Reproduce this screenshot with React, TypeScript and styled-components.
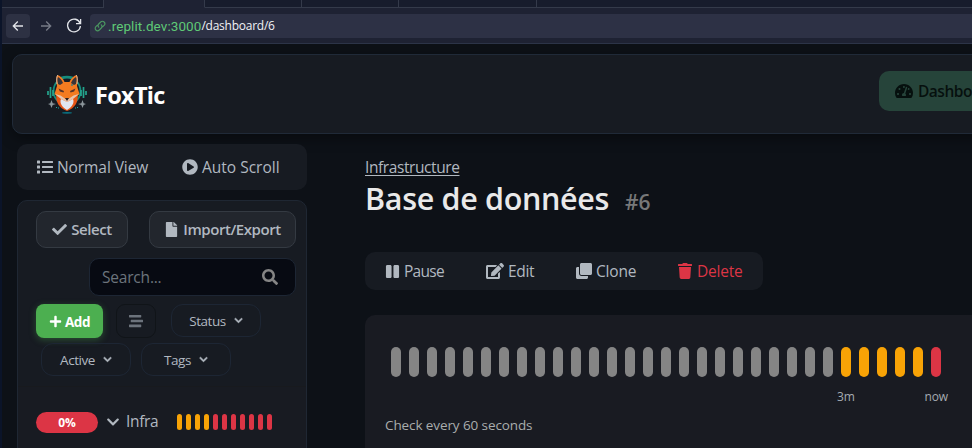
import React from 'react';
import styled, { createGlobalStyle, css } from 'styled-components';
import {
  FaCheck, FaChevronDown, FaClone, FaEdit, FaFile, FaList, FaPause, FaPlayCircle,
  FaPlus, FaSearch, FaStream, FaTachometerAlt, FaTrash,
} from 'react-icons/fa';

const Global = createGlobalStyle`
  * { box-sizing: border-box; }
  html, body { margin: 0; height: 100%; overflow: hidden; background: #0d1117; }
  body { font-family: "Open Sans", "Noto Sans", sans-serif; color: #b1b8c0; }
  svg { display: block; flex: none; }
`;

const Window = styled.div`
  width: 972px;
  height: 448px;
  overflow: hidden;
  background: #0d1117;
  border-left: 2px solid #0b1429;
`;

const TabStrip = styled.div`
  display: flex;
  height: 8px;
  background: #1e2233;
`;

const BrowserTab = styled.div<{ $width: number; $active?: boolean }>`
  width: ${p => p.$width}px;
  flex: none;
  height: 8px;
  background: ${p => (p.$active ? '#1e2233' : '#171c2c')};
  border-right: 1px solid #343a4a;
  border-bottom: 1px solid ${p => (p.$active ? '#1e2233' : '#343a4a')};
`;

const Toolbar = styled.div`
  display: flex;
  align-items: center;
  height: 36px;
  padding: 0 0 0 4px;
  background: #1e2233;
  border-bottom: 1px solid #2d3549;
`;

const NavButton = styled.button<{ $filled?: boolean; $dim?: boolean }>`
  display: flex;
  align-items: center;
  justify-content: center;
  width: 24px;
  height: 24px;
  margin-right: 4px;
  padding: 0;
  border: 0;
  border-radius: 4px;
  background: ${p => (p.$filled ? '#2d3143' : 'transparent')};
  color: ${p => (p.$dim ? '#777b87' : '#e2e4e9')};
`;

const AddressBar = styled.div`
  display: flex;
  align-items: center;
  flex: 1;
  height: 24px;
  padding-left: 4px;
  border-radius: 4px 0 0 4px;
  background: #2d3145;
`;

const Host = styled.span`
  margin-left: 2px;
  font: 13.5px/24px Roboto, sans-serif;
  letter-spacing: 0.08px;
  color: #5fc976;
`;

const Path = styled.span`
  font: 500 12px/24px "Open Sans", sans-serif;
  letter-spacing: -0.25px;
  color: #f1f2f5;
`;

const Header = styled.header`
  display: flex;
  align-items: center;
  width: 1100px;
  height: 80px;
  margin: 10px 0 0 10px;
  padding-left: 34px;
  border: 1px solid #202a38;
  border-radius: 10px;
  background: #171b22;
  box-shadow: 0 4px 14px rgba(0, 0, 0, 0.4);
`;

const Brand = styled.div`
  width: 832px;
  display: flex;
  align-items: center;
`;

const BrandName = styled.span`
  margin: 2px 0 0 8px;
  font-size: 23.5px;
  line-height: 30px;
  font-weight: 700;
  letter-spacing: -0.7px;
  color: #fff;
`;

const DashboardLink = styled.div`
  display: flex;
  align-items: center;
  gap: 5px;
  width: 140px;
  height: 40px;
  margin-top: -6px;
  padding-left: 16px;
  border-radius: 10px;
  background: #26443a;
  color: #06100e;
  font-size: 15.5px;
  font-weight: 600;
  letter-spacing: -0.5px;
`;

const Columns = styled.div`
  display: flex;
  padding-left: 15px;
`;

const Sidebar = styled.aside`
  width: 290px;
  padding-top: 10px;
  flex: none;
`;

const Group = styled.div<{ $height: number; $width: number }>`
  display: flex;
  align-items: center;
  width: ${p => p.$width}px;
  height: ${p => p.$height}px;
  padding-left: 20px;
  border-radius: 10px;
  background: #171b22;
`;

const GroupItem = styled.div<{ $width: number; $danger?: boolean; $tight?: number }>`
  display: flex;
  align-items: center;
  gap: 4px;
  width: ${p => p.$width}px;
  flex: none;
  white-space: nowrap;
  font-size: 15.5px;
  line-height: 20px;
  letter-spacing: ${p => p.$tight ?? 0}px;
  color: ${p => (p.$danger ? '#dc3545' : '#b1b8c0')};
`;

const Panel = styled.div`
  height: 260px;
  margin-top: 10px;
  padding: 10px 10px 0 18px;
  border: 1px solid #1f2733;
  border-radius: 10px;
  background: #171b22;
`;

const Row = styled.div`
  display: flex;
  align-items: center;
`;

const PanelActions = styled(Row)`
  justify-content: space-between;
`;

const ActionButton = styled.button<{ $width: number; $tight: number }>`
  display: flex;
  align-items: center;
  justify-content: center;
  gap: 4px;
  width: ${p => p.$width}px;
  height: 37px;
  padding: 0 0 1px;
  border: 1px solid #343a42;
  border-radius: 10px;
  background: #22262d;
  color: #b1b8c0;
  font: 600 15px/20px "Open Sans", sans-serif;
  letter-spacing: ${p => p.$tight}px;
  white-space: nowrap;
`;

const SearchBox = styled.div`
  display: flex;
  align-items: center;
  justify-content: space-between;
  width: 207px;
  height: 38px;
  margin: 10px 0 0 auto;
  padding: 0 17px 0 12px;
  border: 1px solid #1d2634;
  border-radius: 10px;
  background: #070a12;
  color: #858585;
`;

const Placeholder = styled.span`
  font-size: 15.5px;
  letter-spacing: -0.2px;
  color: #6c747c;
`;

const Filters = styled(Row)<{ $second?: boolean }>`
  margin-top: ${p => (p.$second ? 5 : 8)}px;
  padding-left: ${p => (p.$second ? 5 : 0)}px;
  gap: ${p => (p.$second ? 10 : 0)}px;
  align-items: flex-start;
`;

const AddButton = styled.button`
  display: flex;
  align-items: center;
  justify-content: center;
  gap: 3px;
  width: 67px;
  height: 34px;
  padding: 1px 0 0;
  border: 0;
  border-radius: 8px;
  background: #4caf50;
  box-shadow: 0 2px 7px rgba(76, 175, 80, 0.35);
  color: #fff;
  font: 700 13.5px/20px "Open Sans", sans-serif;
  letter-spacing: -0.45px;
`;

const SortButton = styled.button`
  display: flex;
  align-items: center;
  justify-content: center;
  width: 40px;
  height: 34px;
  margin: 0 15px 0 13px;
  padding: 0;
  border: 1px solid #101418;
  border-radius: 9px;
  background: #171b22;
  color: #6c737c;
`;

const Dropdown = styled.button`
  display: flex;
  align-items: center;
  justify-content: center;
  gap: 8px;
  width: 90px;
  height: 33px;
  padding: 0;
  border: 1px solid #1d2634;
  border-radius: 12px;
  background: transparent;
  color: #b1b8c0;
  font: 13.5px/18px "Open Sans", sans-serif;
  letter-spacing: -0.45px;

  svg { stroke: currentColor; stroke-width: 30px; }
`;

const MonitorRow = styled(Row)`
  height: 73px;
  margin: 10px -10px 0 -18px;
  padding: 0 0 2px 18px;
  border-top: 1px solid #181a1e;
  background: #181b22;
`;

const Uptime = styled.span`
  width: 62px;
  height: 21px;
  margin-right: 8px;
  border-radius: 11px;
  background: #dc3545;
  color: #fff;
  text-align: center;
  font-size: 12px;
  line-height: 22px;
  font-weight: 700;
  letter-spacing: -0.2px;
`;

const MonitorName = styled.span`
  width: 51px;
  margin: -2px 0 0 6px;
  font-size: 15.5px;
  line-height: 20px;
  letter-spacing: -0.35px;
`;

const tones = { idle: '#858585', warn: '#f8a306', down: '#dc3545' };
type Tone = keyof typeof tones;

const Beats = styled.div<{ $gap: number }>`
  display: flex;
  gap: ${p => p.$gap}px;
`;

const Beat = styled.i<{ $tone: Tone; $large?: boolean }>`
  flex: none;
  border-radius: 5px;
  background: ${p => tones[p.$tone]};
  ${p => (p.$large
    ? css`width: 10px; height: 30px;`
    : css`width: 5px; height: 16px;`)}
`;

const Main = styled.main`
  width: 620px;
  flex: none;
  padding: 23px 0 0 58px;
`;

const Parent = styled.a`
  display: block;
  width: max-content;
  font-size: 15.5px;
  line-height: 20px;
  letter-spacing: -0.41px;
  text-decoration: underline;
  text-underline-offset: 2px;
`;

const Title = styled.h1`
  display: flex;
  align-items: baseline;
  margin: 0;
  padding-top: 1px;
  height: 75px;
  font-size: 30.5px;
  line-height: 40px;
  font-weight: 600;
  letter-spacing: -0.33px;
  color: #e9e9e9;
  white-space: nowrap;
`;

const MonitorId = styled.span`
  margin-left: 16px;
  font-size: 21px;
  letter-spacing: 0;
  color: #777879;
`;

const HistoryCard = styled.section`
  width: 640px;
  height: 160px;
  margin-top: 25px;
  padding: 32px 0 0 26px;
  border-radius: 10px;
  background: #191b22;
`;

const TimeLabels = styled.div`
  display: flex;
  justify-content: space-between;
  width: 111px;
  margin: 12px 0 0 446px;
  font-size: 12px;
  line-height: 16px;
  color: #a5abb1;
  letter-spacing: -0.15px;
`;

const Interval = styled.p`
  margin: 10px 0 0 -6px;
  font-size: 13.5px;
  line-height: 20px;
  letter-spacing: -0.1px;
  color: #a9adad;
`;

function FoxLogo() {
  return (
    <svg width="40" height="40" viewBox="0 0 40 40">
      <g fill="none" stroke="#168c7d">
        <circle cx="20" cy="17" r="13.5" strokeWidth="1.8" />
        <path d="M14 3.5q6-2 12 0" strokeWidth="1.7" />
        <path d="M1 17v4M3.5 13v11M6 16v6M34 16v6M36.5 13v11M39 17v4" stroke="#24a58d" strokeWidth="1.7" />
      </g>
      <path d="M9.5 19C8 28 12 34 20 37c8-3 12-9 10.5-18z" fill="#e65516" />
      <path d="M10 12C9 6 9 3 10.5 1c3 1 6 4 7 7h5c1-3 4-6 7-7C31 3 31 6 30 12l2.5 8L25 26l-5 3-5-3-7.5-6z" fill="#f47b20" />
      <path d="M11 10c-1-4-.6-6 0-7 2 1 4 3 5 6l-3 2zM29 10c1-4 .6-6 0-7-2 1-4 3-5 6l3 2z" fill="#3b3437" />
      <path d="M10 10c-.7-4-.5-7 .7-9M30 10c.7-4 .5-7-.7-9" fill="none" stroke="#d2c2b3" strokeWidth=".8" />
      <path d="M8 20l5.5 1.5L20 26l6.5-4.5L32 20l-5.5 4.5L20 28l-6.5-3.5z" fill="#e8c5b0" />
      <path d="M11.5 14.5l5.5 2.4-.5 1.5-3.6-1zM28.5 14.5L23 16.9l.5 1.5 3.6-1z" fill="#573329" />
      <path d="M18 24h4l-2 3z" fill="#252127" />
      <path d="M14 25l6 3 6-3c2 4-2 9-6 11-4-2-8-7-6-11z" fill="#e1e6ef" />
      <path d="M4.5 26l1.2 3.2L9 30l-3.3 1-1.2 3-1.2-3L1 30l2.3-.8zM35.5 26l1.2 3.2L39 30l-2.3 1-1.2 3-1.2-3-3.3-1 3.3-.8z" fill="#8c969b" />
      <path d="M9 33.5h1M11 34h1M28 34h1M30 33.5h1" stroke="#20a6a3" />
      <ellipse cx="20" cy="38.8" rx="5" ry=".9" fill="#0a7181" />
      <circle cx="25" cy="11" r=".9" fill="#377f84" />
    </svg>
  );
}

const Arrow = ({ flip = false }: { flip?: boolean }) => (
  <svg width="12" height="12" viewBox="0 0 12 12" fill="none" stroke="currentColor" strokeWidth="1.3">
    <path d={flip ? 'M1 6h9.5M6.2 1.5L10.7 6l-4.5 4.5' : 'M11 6H1.5M5.8 1.5L1.3 6l4.5 4.5'} />
  </svg>
);

const Reload = () => (
  <svg width="16" height="16" viewBox="0 0 16 16" fill="none" stroke="currentColor" strokeWidth="1.3">
    <path d="M14 5.2A6.4 6.4 0 1 0 14.4 8M14.6 1v4.7H10" />
  </svg>
);

const LinkIcon = () => (
  <svg width="12" height="12" viewBox="0 0 12 12" fill="none" stroke="#4b9861" strokeWidth="1.15" strokeLinecap="round">
    <path d="M4.7 7.2a2.4 2.4 0 0 1 0-3.2l2-2a2.4 2.4 0 0 1 3.4 3.4L8.8 6.7M7.3 4.8a2.4 2.4 0 0 1 0 3.2l-2 2a2.4 2.4 0 0 1-3.4-3.4l1.3-1.3" />
  </svg>
);

const recent: Tone[] = Array.from({ length: 11 }, (_, i) => (i < 4 ? 'warn' : 'down'));
const history: Tone[] = Array.from({ length: 31 }, (_, i) => (i < 25 ? 'idle' : i < 30 ? 'warn' : 'down'));

export default function App() {
  return (
    <>
      <Global />
      <Window>
        <TabStrip>
          <BrowserTab $width={102} />
          <BrowserTab $width={101} $active />
          <BrowserTab $width={97} />
          <BrowserTab $width={97} />
          <BrowserTab $width={138} />
          <BrowserTab $width={436} />
        </TabStrip>
        <Toolbar>
          <NavButton $filled aria-label="Back"><Arrow /></NavButton>
          <NavButton $dim aria-label="Forward"><Arrow flip /></NavButton>
          <NavButton aria-label="Reload"><Reload /></NavButton>
          <AddressBar>
            <LinkIcon />
            <Host>.replit.dev:3000</Host>
            <Path>/dashboard/6</Path>
          </AddressBar>
        </Toolbar>
        <Header>
          <Brand>
            <FoxLogo />
            <BrandName>FoxTic</BrandName>
          </Brand>
          <DashboardLink><FaTachometerAlt size={18} />Dashboard</DashboardLink>
        </Header>
        <Columns>
          <Sidebar>
            <Group $width={290} $height={46}>
              <GroupItem $width={145} $tight={-0.08}><FaList size={16} />Normal View</GroupItem>
              <GroupItem $width={110} $tight={0}><FaPlayCircle size={16} />Auto Scroll</GroupItem>
            </Group>
            <Panel>
              <PanelActions>
                <ActionButton $width={92} $tight={-0.4}><FaCheck size={15} />Select</ActionButton>
                <ActionButton $width={147} $tight={-0.45}><FaFile size={15} />Import/Export</ActionButton>
              </PanelActions>
              <SearchBox><Placeholder>Search...</Placeholder><FaSearch size={16} /></SearchBox>
              <Filters>
                <AddButton><FaPlus size={13} />Add</AddButton>
                <SortButton aria-label="Sort"><FaStream size={14} /></SortButton>
                <Dropdown>Status<FaChevronDown size={9} /></Dropdown>
              </Filters>
              <Filters $second>
                <Dropdown>Active<FaChevronDown size={9} /></Dropdown>
                <Dropdown>Tags<FaChevronDown size={9} /></Dropdown>
              </Filters>
              <MonitorRow>
                <Uptime>0%</Uptime>
                <FaChevronDown size={14} />
                <MonitorName>Infra</MonitorName>
                <Beats $gap={4}>{recent.map((t, i) => <Beat key={i} $tone={t} />)}</Beats>
              </MonitorRow>
            </Panel>
          </Sidebar>
          <Main>
            <Parent>Infrastructure</Parent>
            <Title>Base de données<MonitorId>#6</MonitorId></Title>
            <Group $width={398} $height={38}>
              <GroupItem $width={101} $tight={-0.7}><FaPause size={15} />Pause</GroupItem>
              <GroupItem $width={90} $tight={-0.3}><FaEdit size={18} />Edit</GroupItem>
              <GroupItem $width={101} $tight={-0.2}><FaClone size={16} />Clone</GroupItem>
              <GroupItem $width={80} $tight={-0.2} $danger><FaTrash size={16} />Delete</GroupItem>
            </Group>
            <HistoryCard>
              <Beats $gap={8}>{history.map((t, i) => <Beat key={i} $tone={t} $large />)}</Beats>
              <TimeLabels><span>3m</span><span>now</span></TimeLabels>
              <Interval>Check every 60 seconds</Interval>
            </HistoryCard>
          </Main>
        </Columns>
      </Window>
    </>
  );
}
